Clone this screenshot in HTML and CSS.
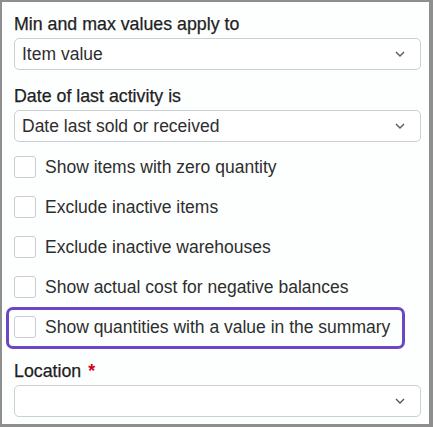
FILE: index.html
```html
<!DOCTYPE html>
<html lang="en">
<head>
<meta charset="utf-8">
<title>Report options</title>
<link rel="stylesheet" href="styles.css">
</head>
<body>
<div class="panel">
  <div class="field">
    <div class="label">Min and max values apply to</div>
    <div class="select"><span class="value">Item value</span><svg class="chev" width="10" height="6" viewBox="0 0 10 6"><path d="M1 1 L5 5 L9 1" fill="none" stroke="#555" stroke-width="1.3"/></svg></div>
  </div>
  <div class="field">
    <div class="label">Date of last activity is</div>
    <div class="select"><span class="value">Date last sold or received</span><svg class="chev" width="10" height="6" viewBox="0 0 10 6"><path d="M1 1 L5 5 L9 1" fill="none" stroke="#555" stroke-width="1.3"/></svg></div>
  </div>
  <div class="checks">
    <div class="check"><span class="box"></span><span class="text">Show items with zero quantity</span></div>
    <div class="check"><span class="box"></span><span class="text">Exclude inactive items</span></div>
    <div class="check"><span class="box"></span><span class="text">Exclude inactive warehouses</span></div>
    <div class="check"><span class="box"></span><span class="text">Show actual cost for negative balances</span></div>
    <div class="check focused"><span class="box"></span><span class="text">Show quantities with a value in the summary</span></div>
  </div>
  <div class="field location">
    <div class="label">Location <span class="req">*</span></div>
    <div class="select"><span class="value"></span><svg class="chev" width="10" height="6" viewBox="0 0 10 6"><path d="M1 1 L5 5 L9 1" fill="none" stroke="#555" stroke-width="1.3"/></svg></div>
  </div>
</div>
</body>
</html>
```

FILE: styles.css
```css
html, body {
  margin: 0;
  padding: 0;
  height: 427px;
  background: #8e8e8e;
  overflow: hidden;
}
body {
  font-family: "Liberation Sans", Arial, sans-serif;
  color: #2e2e2e;
  font-size: 17.5px;
  line-height: 20px;
}
.panel {
  box-sizing: border-box;
  margin: 2px 4px 0 2px;
  height: 422px;
  background: #fdfefe;
  padding: 12px 8px 0 12px;
  display: flex;
  flex-direction: column;
}
.field + .field {
  margin-top: 16px;
}
.label {
  margin-bottom: 4px;
  color: #1f1f1f;
  font-size: 17.8px;
  -webkit-text-stroke: 0.25px #1f1f1f;
}
.req {
  color: #d0021b;
  font-weight: bold;
  margin-left: 2px;
  -webkit-text-stroke: 0;
}
.select {
  box-sizing: border-box;
  height: 32px;
  border: 1px solid #c9d0d6;
  border-radius: 5px;
  background: #fff;
  display: flex;
  align-items: center;
  justify-content: space-between;
  padding: 0 15px 0 7px;
}
.chev {
  display: block;
  flex: none;
}
.checks {
  margin-top: 14px;
  display: flex;
  flex-direction: column;
  gap: 18px;
}
.check {
  display: flex;
  align-items: center;
  gap: 9px;
  height: 22px;
}
.box {
  box-sizing: border-box;
  width: 22px;
  height: 22px;
  border: 1px solid #c8ced4;
  border-radius: 3px;
  background: #fff;
  flex: none;
}
.focused {
  position: relative;
  align-self: flex-start;
}
.focused::after {
  content: "";
  position: absolute;
  top: -9px;
  bottom: -11px;
  left: -8px;
  right: -15px;
  border: 3px solid #6c47c3;
  border-radius: 7px;
  pointer-events: none;
}
.location {
  margin-top: 23px;
}
```
